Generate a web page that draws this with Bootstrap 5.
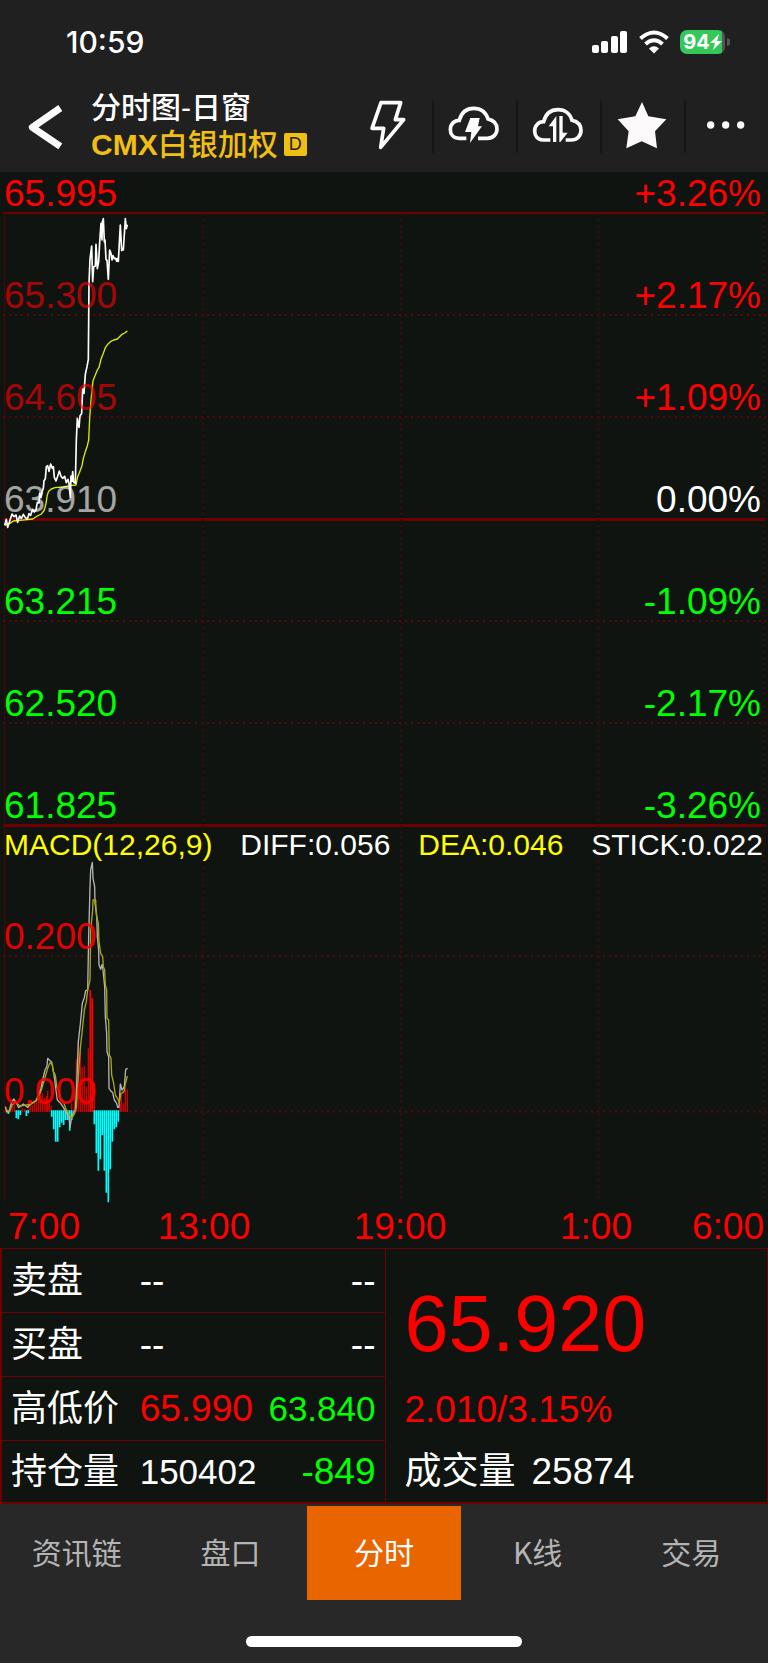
<!DOCTYPE html>
<html lang="zh-CN">
<head>
<meta charset="utf-8">
<meta name="viewport" content="width=device-width, initial-scale=1">
<title>CMX白银加权 分时图</title>
<link href="https://cdn.jsdelivr.net/npm/bootstrap@5.3.0/dist/css/bootstrap.min.css" rel="stylesheet">
<style>
  :root { --line: #6e0000; --up: #ff0000; --down: #00ff00; }
  body { background: #282828; color: #fff; font-family: "Liberation Sans", "Noto Sans CJK SC", sans-serif; line-height: 1; }
  .top-area { background: #202020; }
  .status-row { height: 80px; padding: 4px 38px 0 66px; font-family: Inter, sans-serif; }
  .clock { font-size: 30px; font-weight: 500; }
  .charge { width: 45px; height: 24px; border-radius: 7px; background: linear-gradient(90deg, #34c759 94%, #555 94%); font-size: 20px; font-weight: 700; }
  .charge-tip { width: 3px; height: 8px; margin-left: 2px; border-radius: 0 3px 3px 0; background: #555; }
  .app-row { height: 92px; }
  .back-btn { width: 91px; }
  .title-line { font-size: 30px; line-height: 37px; font-weight: 500; }
  .symbol-line { font-size: 30px; line-height: 37px; color: #f0bf14; font-weight: 500; }
  .kind-tag { width: 23px; height: 23px; margin-left: 6px; border-radius: 2px; background: #f0bf14; color: #202020; font-size: 18px; line-height: 23px; }
  .plain-btn { background: none; border: 0; padding: 0; color: #fcfafb; }
  .tool-btn { width: 84px; height: 53px; }
  .tool-btn + .tool-btn { border-left: 2px solid #161616; }
  .market { background: #0f1410; }
  .plot { font-size: 37px; line-height: 36px; }
  .plot-svg { position: absolute; inset: 0; width: 100%; height: 100%; }
  .scale-row { height: 102px; padding: 0 7px 1px 4px; }
  .scale-row.first-row { height: 41px; }
  .up { color: var(--up); }
  .down { color: var(--down); }
  .dim { opacity: .62; }
  .soft { opacity: .87; }
  .macd-head { height: 35px; padding: 5px 5px 0 4px; font-size: 30px; line-height: 30px; }
  .yellow { color: #ffff00; }
  .macd-a { height: 96px; padding: 0 4px 1px; }
  .macd-b { height: 155px; padding: 0 4px 1px; }
  .macd-c { height: 91px; }
  .time-axis { height: 46px; padding-top: 4px; display: grid; grid-template-columns: 105fr 198fr 198fr 198fr 69fr; align-items: center; }
  .time-axis .mark-label { padding-left: 4px; }
  .quotes { border: 1px solid var(--line); border-bottom-width: 2px; border-left-width: 2px; font-size: 37px; }
  .quote-table { table-layout: fixed; border-collapse: separate; border-spacing: 0; }
  .quote-table th, .quote-table td { height: 64px; padding: 0; font-weight: 400; white-space: nowrap; border-bottom: 1px solid var(--line); }
  .quote-table tr:last-child > * { height: 61px; border-bottom: 0; }
  .quote-table th { width: 36%; padding-left: 9px; font-size: 36px; }
  .quote-table td:last-child { text-align: right; padding-right: 9px; width: 32%; }
  .quote-table .mid { font-size: 35px; }
  .last-box { border-left: 1px solid var(--line); padding-left: 19px; }
  .last-price { font-size: 79px; height: 128px; padding-top: 20px; }
  .last-line { height: 64px; }
  .last-line:last-child { height: 61px; }
  .tabs-row { padding-top: 2px; }
  .tab-link { height: 94px; padding-bottom: 4px; font-size: 30px; color: #b4b4b4; text-decoration: none; font-family: "Noto Sans CJK SC", sans-serif; font-weight: 400; }
  .tab-link.active { background: #e96500; color: #fff; }
  .home-area { padding: 36px 0 16px; }
  .home-bar { width: 36%; height: 11px; border-radius: 6px; background: #fff; }
</style>
</head>
<body>
<header class="top-area">
  <div class="status-row d-flex align-items-center justify-content-between">
    <span class="clock">10:59</span>
    <div class="d-flex align-items-center">
      <svg width="36" height="24" viewBox="0 0 36 24" fill="#fff" aria-hidden="true">
        <rect x="0" y="15" width="7" height="8" rx="2"/><rect x="9" y="11" width="7" height="12" rx="2"/><rect x="19" y="6" width="7" height="17" rx="2"/><rect x="28" y="1" width="7" height="22" rx="2"/>
      </svg>
      <svg class="ms-2 me-2" width="36" height="24" viewBox="0 0 36 24" fill="none" stroke="#fff" stroke-width="4" aria-hidden="true">
        <path d="M4.5 8.5Q18-3.5 31.500 8.500M9.500 14Q18 6.500 26.500 14"/><path d="M13 18.500Q18 14 23 18.500L18 23.500Z" fill="#fff" stroke="none"/>
      </svg>
      <span class="charge d-flex align-items-center justify-content-center">94<svg width="12" height="18" viewBox="0 0 12 18" fill="#fff" aria-hidden="true"><path d="M9 1 0 10h5l-2 7 9-9H7Z"/></svg></span>
      <span class="charge-tip"></span>
    </div>
  </div>
  <div class="app-row d-flex align-items-center">
    <button class="plain-btn back-btn" aria-label="返回">
      <svg class="d-block" width="91" height="54" viewBox="0 0 273 162" fill="none" stroke="#fcfafb" stroke-width="21" stroke-linejoin="round" aria-hidden="true"><path d="M181 27 97 85l84 57" /></svg>
    </button>
    <div class="flex-grow-1 text-nowrap">
      <div class="title-line">分时图-日窗</div>
      <div class="symbol-line d-flex align-items-center"><span class="fw-bold">CMX</span>白银加权<span class="kind-tag text-center">D</span></div>
    </div>
    <div class="d-flex">
      <button class="plain-btn tool-btn d-flex align-items-center justify-content-center" aria-label="闪电下单">
        <svg width="54" height="54" viewBox="15 297 162 162" fill="none" stroke="#fcfafb" stroke-width="11" stroke-linejoin="round"><path d="M69 308h59l-16 51h25L68 442l9-57H42Z"/></svg>
      </button>
      <button class="plain-btn tool-btn d-flex align-items-center justify-content-center" aria-label="云条件单">
        <svg width="54" height="54" viewBox="264 297 162 162" fill="none" stroke="#fcfafb" stroke-width="11"><path d="M319 415H297C280 414 271 402 271 389 271 372 283 361 298 361 304 338 320 325 341 325 363 325 378 338 384 357 402 361 411 373 411 387 411 403 399 415 382 415H354"/><path d="M331 354h28l-5 25h12l-36 50 4-33h-19Z" fill="#fcfafb" stroke="none"/></svg>
      </button>
      <button class="plain-btn tool-btn d-flex align-items-center justify-content-center" aria-label="云止损">
        <svg width="54" height="54" viewBox="515 297 162 162" fill="none" stroke="#fcfafb" stroke-width="11"><path d="M570 420H548C531 419 523 407 523 393 523 376 535 365 550 365 556 341 572 329 593 329 615 329 630 342 635 361 653 365 662 377 662 391 662 408 650 420 633 420H616"/><path d="M578 426V379H565L588 348V426ZM597 348H607V398H622L600 426H597Z" fill="#fcfafb" stroke="none"/></svg>
      </button>
      <button class="plain-btn tool-btn d-flex align-items-center justify-content-center" aria-label="自选">
        <svg width="54" height="54" viewBox="767 297 162 162" fill="#fcfafb"><path d="M845 306 864 349 918 358 884 394 890 445 844 424 798 445 805 394 772 358 825 349Z"/></svg>
      </button>
      <button class="plain-btn tool-btn d-flex align-items-center justify-content-center" aria-label="更多">
        <svg width="54" height="54" viewBox="1020 297 162 162" fill="#fcfafb"><circle cx="1052" cy="375" r="11"/><circle cx="1097" cy="375" r="11"/><circle cx="1142" cy="375" r="11"/></svg>
      </button>
    </div>
  </div>
</header>

<main class="market">
  <section class="plot position-relative">
    <svg class="plot-svg" viewBox="0 172 768 1076" preserveAspectRatio="none" fill="none" aria-hidden="true">
      <g stroke="#6e0000">
        <path d="M3 213H766" stroke-width="2"/><path d="M3 519.500H766M3 825.500H766" stroke-width="3"/>
        <path d="M4.500 213V1202" stroke="#4a0505"/>
        <path d="M3 315H766M3 417H766M3 621H766M3 723H766M3 956H766M3 1111.500H766" stroke="#560808" stroke-width="2" stroke-dasharray="2 4"/>
        <path d="M203 213V1202M401 213V1202M598.500 213V1202M764 213V1202" stroke="#3f0909" stroke-width="2" stroke-dasharray="2 4"/>
      </g>
      <!-- price and average lines -->
      <svg x="0" y="200" width="220" height="340" viewBox="0 0 660 1020" stroke-linejoin="round">
        <path stroke="#d8f000" stroke-width="4" d="M14 976 30 970 40 963 60 961 98 957 112 948 124 942 133 930 138 910 142 885 146 874 154 867 165 863 190 861 210 857 228 855 233 830 238 818 246 797 250 775 256 755 262 737 266 720 269 655 273 600 279 542 286 525 292 510 297 502 303 478 310 460 316 443 323 433 333 424 341 420 352 417 359 410 366 403 374 399 382 393"/>
        <path stroke="#fff" stroke-width="5" d="M14 976 19 958 23 982 31 958 36 942 42 950 48 945 53 967 59 948 64 956 70 943 76 953 82 957 87 941 92 946 98 928 103 936 108 930 112 907 117 909 119 880 123 893 126 875 130 865 132 842 136 836 139 800 143 797 147 814 152 792 157 805 160 800 163 832 168 843 173 829 178 813 183 829 188 835 194 829 199 848 204 838 207 850 211 892 213 828 216 844 218 815 221 846 226 850 229 720 232 655 237 682 240 648 245 640 248 567 252 580 256 523 261 500 265 478 267 250 270 178 275 138 278 245 281 200 286 198 288 133 292 206 296 185 299 128 303 70 306 120 307 66 310 56 313 126 315 120 318 178 321 181 325 238 329 150 333 160 336 180 339 167 343 176 347 175 350 184 352 176 355 184 361 75 365 152 368 146 370 150 376 56 379 86 382 74"/>
      </svg>
      <!-- MACD sticks and lines -->
      <svg x="0" y="820" width="220" height="430" viewBox="0 0 660 1290" stroke-linejoin="round">
        <path stroke="#d00000" stroke-width="4" d="M19 876V860M31 876V852M37 876V848M43 876V848M67 876V865M73 876V868M85 876V842M91 876V842M97 876V855M103 876V845M109 876V838M115 876V835M121 876V825M127 876V820M133 876V833M139 876V828M143 876V812M148 876V850M154 876V858M215 876V850M223 876V820M229 876V718M235 876V665M241 876V695M247 876V742M253 876V738M259 876V800M265 876V685M283 876V788M360 876V850M364 876V820M370 876V850M376 876V805M382 876V808"/>
        <path stroke="#ff0000" stroke-width="5" d="M271 876V510M277 876V535"/>
        <path stroke="#00ffff" stroke-width="5" d="M25 871V882M49 871V895M55 871V898M61 871V885M79 871V888M85 871V880M155 871V890M161 871V928M167 871V965M173 871V965M179 871V922M185 871V908M191 871V915M197 871V900M203 871V900M209 871V932M215 871V900M283 871V913M289 871V1000M295 871V1052M301 871V1018M307 871V945M313 871V1052M319 871V1118M325 871V1147M331 871V1048M337 871V965M343 871V928M349 871V922M355 871V905"/>
        <path stroke="#b4b4b4" stroke-width="4" d="M16 860 20 876 28 872 34 850 41 837 50 850 56 863 70 852 82 862 95 850 108 842 117 820 122 810 128 780 135 750 141 738 143 715 148 720 155 726 162 765 168 810 172 840 182 850 190 862 200 880 207 890 210 922 215 892 222 873 226 870 229 820 235 665 241 612 247 550 253 533 257 512 263 510 266 350 270 200 272 150 277 127 279 175 284 200 285 250 290 285 292 350 296 390 297 435 302 448 306 433 309 450 314 500 316 590 320 640 321 695 326 710 327 805 332 812 338 818 343 840 350 850 353 862 357 862 361 792 366 810 373 800 377 748 383 745"/>
        <path stroke="#a8a810" stroke-width="4" d="M16 866 28 876 36 855 45 847 60 858 90 853 105 845 114 835 124 810 130 790 136 770 143 745 150 728 157 734 160 755 166 765 170 800 176 810 180 835 190 845 197 865 208 885 215 895 224 880 229 862 235 770 241 685 247 630 253 570 259 545 263 510 270 480 272 330 278 270 279 240 287 240 289 285 295 310 297 365 302 400 308 410 310 440 314 450 316 495 320 510 321 595 326 600 328 705 333 715 335 765 341 790 346 825 354 838 358 850 362 822 372 815 376 792 382 768"/>
      </svg>
    </svg>
    <div class="position-relative">
      <div class="scale-row first-row d-flex justify-content-between align-items-end up"><span>65.995</span><span>+3.26%</span></div>
      <div class="scale-row d-flex justify-content-between align-items-end up"><span class="dim">65.300</span><span>+2.17%</span></div>
      <div class="scale-row d-flex justify-content-between align-items-end up"><span class="dim">64.605</span><span>+1.09%</span></div>
      <div class="scale-row d-flex justify-content-between align-items-end"><span class="dim">63.910</span><span>0.00%</span></div>
      <div class="scale-row d-flex justify-content-between align-items-end down"><span>63.215</span><span>-1.09%</span></div>
      <div class="scale-row d-flex justify-content-between align-items-end down"><span>62.520</span><span>-2.17%</span></div>
      <div class="scale-row d-flex justify-content-between align-items-end down"><span>61.825</span><span>-3.26%</span></div>
      <div class="macd-head d-flex justify-content-between"><span class="yellow">MACD(12,26,9)</span><span>DIFF:0.056</span><span class="yellow">DEA:0.046</span><span>STICK:0.022</span></div>
      <div class="macd-a d-flex align-items-end up"><span class="soft">0.200</span></div>
      <div class="macd-b d-flex align-items-end up"><span class="soft">0.000</span></div>
      <div class="macd-c"></div>
      <div class="time-axis up text-center text-nowrap">
        <span class="text-start ps-2">7:00</span><span class="mark-label">13:00</span><span class="mark-label">19:00</span><span class="mark-label">1:00</span><span class="d-flex justify-content-end pe-1">6:00</span>
      </div>
    </div>
  </section>

  <section class="quotes d-flex">
    <div class="w-50">
      <table class="quote-table w-100">
        <tr><th scope="row">卖盘</th><td>--</td><td>--</td></tr>
        <tr><th scope="row">买盘</th><td>--</td><td>--</td></tr>
        <tr><th scope="row">高低价</th><td class="up">65.990</td><td class="down mid">63.840</td></tr>
        <tr><th scope="row">持仓量</th><td class="mid">150402</td><td class="down">-849</td></tr>
      </table>
    </div>
    <div class="last-box w-50">
      <div class="last-price up d-flex align-items-center">65.920</div>
      <div class="last-line up d-flex align-items-center">2.010/3.15%</div>
      <div class="last-line d-flex align-items-center gap-3"><span>成交量</span><span>25874</span></div>
    </div>
  </section>
</main>

<footer>
  <nav class="tabs-row d-flex" aria-label="行情页面">
    <a class="tab-link w-100 d-flex align-items-center justify-content-center" href="#news">资讯链</a>
    <a class="tab-link w-100 d-flex align-items-center justify-content-center" href="#depth">盘口</a>
    <a class="tab-link w-100 d-flex align-items-center justify-content-center active" href="#minute" aria-current="page">分时</a>
    <a class="tab-link w-100 d-flex align-items-center justify-content-center" href="#kline">K线</a>
    <a class="tab-link w-100 d-flex align-items-center justify-content-center" href="#trade">交易</a>
  </nav>
  <div class="home-area"><div class="home-bar mx-auto"></div></div>
</footer>
<script src="https://cdn.jsdelivr.net/npm/bootstrap@5.3.0/dist/js/bootstrap.bundle.min.js"></script>
</body>
</html>
